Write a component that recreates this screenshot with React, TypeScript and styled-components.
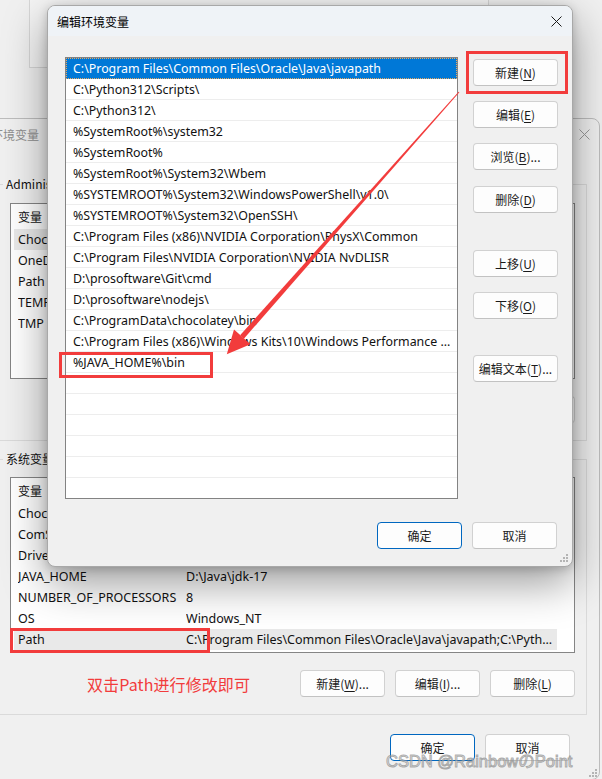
import React from 'react';
import styled, { createGlobalStyle } from 'styled-components';

const UI_FONT = `"Noto Sans", "Noto Sans CJK SC", sans-serif`;
const CJK_FONT = `"Noto Sans CJK SC", "Noto Sans", sans-serif`;
const RED = '#f23c3c';

const GlobalStyle = createGlobalStyle`
  html, body {
    margin: 0;
    padding: 0;
  }
  body {
    background: #f0f0f0;
    font-family: ${UI_FONT};
  }
  * {
    box-sizing: border-box;
  }
`;

const pathEntries = [
  'C:\\Program Files\\Common Files\\Oracle\\Java\\javapath',
  'C:\\Python312\\Scripts\\',
  'C:\\Python312\\',
  '%SystemRoot%\\system32',
  '%SystemRoot%',
  '%SystemRoot%\\System32\\Wbem',
  '%SYSTEMROOT%\\System32\\WindowsPowerShell\\v1.0\\',
  '%SYSTEMROOT%\\System32\\OpenSSH\\',
  'C:\\Program Files (x86)\\NVIDIA Corporation\\PhysX\\Common',
  'C:\\Program Files\\NVIDIA Corporation\\NVIDIA NvDLISR',
  'D:\\prosoftware\\Git\\cmd',
  'D:\\prosoftware\\nodejs\\',
  'C:\\ProgramData\\chocolatey\\bin',
  'C:\\Program Files (x86)\\Windows Kits\\10\\Windows Performance ...',
  '%JAVA_HOME%\\bin',
];

// values of the user variables sit behind the edit dialog, so only names are shown
const userVars = ['ChocolateyLastPathUpdate', 'OneDrive', 'Path', 'TEMP', 'TMP'];

const systemVars = [
  ['ChocolateyInstall', ''],
  ['ComSpec', ''],
  ['DriverData', ''],
  ['JAVA_HOME', 'D:\\Java\\jdk-17'],
  ['NUMBER_OF_PROCESSORS', '8'],
  ['OS', 'Windows_NT'],
  ['Path', 'C:\\Program Files\\Common Files\\Oracle\\Java\\javapath;C:\\Pyth...'],
];

// ---------- desktop ----------

const Desktop = styled.div`
  position: relative;
  width: 602px;
  height: 779px;
  overflow: hidden;
  background: #f0f0f0;
`;

const FarWindow = styled.div`
  position: absolute;
  left: 29px;
  top: -1px;
  width: 460px;
  height: 69px;
  border: 1px solid #d6d6d6;
  background: #f4f4f4;
`;

// ---------- shared widgets ----------

const CloseGlyph: React.FC<{ color: string }> = ({ color }) => (
  <svg width="11" height="11" viewBox="0 0 11 11">
    <path d="M0.5 0.5 L10.5 10.5 M10.5 0.5 L0.5 10.5" stroke={color} strokeWidth="1" />
  </svg>
);

const Grip: React.FC = () => (
  <svg width="8" height="8" viewBox="0 0 8 8">
    <g fill="#b4b4b4">
      <rect x="6" y="0" width="2" height="2" />
      <rect x="3" y="3" width="2" height="2" />
      <rect x="6" y="3" width="2" height="2" />
      <rect x="0" y="6" width="2" height="2" />
      <rect x="3" y="6" width="2" height="2" />
      <rect x="6" y="6" width="2" height="2" />
    </g>
  </svg>
);

const Button = styled.button<{ $default?: boolean; $mt?: number }>`
  width: 85px;
  height: 27px;
  margin: ${(p) => p.$mt ?? 0}px 0 0;
  padding: 0;
  flex: none;
  background: #fdfdfd;
  border: 1px solid ${(p) => (p.$default ? '#0067c0' : '#d1d1d1')};
  border-bottom-color: ${(p) => (p.$default ? '#0067c0' : '#c2c2c2')};
  border-radius: 4px;
  font-family: ${CJK_FONT};
  font-size: 12px;
  color: #1a1a1a;
  line-height: 25px;

  u {
    text-decoration: underline;
    text-underline-offset: 2px;
  }
`;

// ---------- background window: 环境变量 ----------

const EnvWindow = styled.div`
  position: absolute;
  left: -15px;
  top: 118px;
  width: 615px;
  height: 662px;
  display: flex;
  flex-direction: column;
  background: #f0f0f0;
  border: 1px solid #bdbdbd;
  border-radius: 8px;
`;

const EnvTitle = styled.div`
  height: 31px;
  display: flex;
  align-items: center;
  justify-content: space-between;
  padding: 0 9px 0 5px;
  font-family: ${CJK_FONT};
  font-size: 12px;
  color: #8e8e8e;
`;

const EnvBody = styled.div`
  display: flex;
  flex-direction: column;
  padding: 0 12px 0 12px;
`;

const GroupBox = styled.fieldset<{ $mt: number }>`
  margin: ${(p) => p.$mt}px 0 0;
  padding: 0 11px 17px 11px;
  min-width: 0;
  border: 1px solid #dadada;
`;

const GroupLabel = styled.legend`
  margin-left: -7px;
  padding: 0 3px;
  font-family: ${CJK_FONT};
  font-size: 12px;
  line-height: 16px;
  color: #111;
`;

const VarList = styled.div<{ $mt: number }>`
  margin-top: ${(p) => p.$mt}px;
  height: 176px;
  background: #fff;
  border: 1px solid #858585;
  overflow: hidden;
`;

const VarRow = styled.div<{ $head?: boolean; $selected?: boolean }>`
  display: grid;
  grid-template-columns: 168px 1fr;
  height: ${(p) => (p.$head ? 25 : 21)}px;
  align-items: center;
  margin: 0 17px 0 3px;
  padding-left: 4px;
  background: ${(p) => (p.$selected ? '#e9e9e9' : 'transparent')};
  font-family: ${(p) => (p.$head ? CJK_FONT : UI_FONT)};
  font-size: ${(p) => (p.$head ? 12 : 12.5)}px;
  color: #111;
  white-space: nowrap;

  span {
    overflow: hidden;
  }
`;

const ButtonRow = styled.div`
  display: flex;
  align-items: center;
  justify-content: flex-end;
  gap: 10px;
  margin-top: 17px;
`;

const Hint = styled.div`
  margin-left: 77px;
  margin-right: auto;
  font-family: ${CJK_FONT};
  font-size: 16px;
  color: ${RED};
  letter-spacing: 0.1px;
`;

const Footer = styled.div`
  display: flex;
  justify-content: flex-end;
  gap: 10px;
  margin-top: 19px;
  padding-right: 17px;
`;

const CornerGrip = styled.div<{ $r: number; $b: number }>`
  position: absolute;
  right: ${(p) => p.$r}px;
  bottom: ${(p) => p.$b}px;
  line-height: 0;
`;

// ---------- foreground dialog: 编辑环境变量 ----------

const EditDialog = styled.div`
  position: absolute;
  left: 47px;
  top: 5px;
  width: 526px;
  height: 562px;
  display: flex;
  flex-direction: column;
  background: #f0f0f0;
  border: 1px solid #a8a8a8;
  border-radius: 8px;
  overflow: hidden;
  box-shadow: 0 16px 44px rgba(0, 0, 0, 0.4), 0 2px 10px rgba(0, 0, 0, 0.18);
`;

const DialogTitle = styled.div`
  height: 30px;
  display: flex;
  align-items: center;
  justify-content: space-between;
  padding: 0 10px 0 9px;
  background: #eff3f7;
  font-family: ${CJK_FONT};
  font-size: 12px;
  color: #000;
`;

const DialogBody = styled.div`
  display: grid;
  grid-template-columns: 393px 85px;
  column-gap: 15px;
  padding: 21px 14px 16px 17px;
`;

const PathList = styled.div`
  height: 442px;
  background: #fff;
  border: 1px solid #838383;
  overflow: hidden;
`;

const PathRow = styled.div<{ $selected?: boolean }>`
  height: 21px;
  padding: 2px 0 0 7px;
  border-bottom: 1px solid ${(p) => (p.$selected ? '#0078d7' : '#ededed')};
  background: ${(p) => (p.$selected ? '#0078d7' : '#fff')};
  outline: ${(p) => (p.$selected ? '1px dotted #e8a860' : 'none')};
  outline-offset: -1px;
  font-family: ${UI_FONT};
  font-size: 12.4px;
  line-height: 18px;
  color: ${(p) => (p.$selected ? '#fff' : '#111')};
  white-space: nowrap;
  overflow: hidden;
`;

const SideButtons = styled.div`
  display: flex;
  flex-direction: column;
`;

const DialogFooter = styled.div`
  grid-column: 1 / span 2;
  display: flex;
  justify-content: flex-end;
  gap: 10px;
  margin-top: 23px;
  padding-right: 1px;
`;

// ---------- annotations ----------

const MarkBox = styled.div<{ $x: number; $y: number; $w: number; $h: number }>`
  position: absolute;
  left: ${(p) => p.$x}px;
  top: ${(p) => p.$y}px;
  width: ${(p) => p.$w}px;
  height: ${(p) => p.$h}px;
  border: 3px solid ${RED};
  pointer-events: none;
`;

const ArrowLayer = styled.svg`
  position: absolute;
  left: 0;
  top: 0;
  pointer-events: none;
`;

const Watermark = styled.div`
  position: absolute;
  left: 386px;
  top: 751px;
  font-family: "Liberation Sans", "Noto Sans CJK JP", sans-serif;
  font-size: 16.5px;
  line-height: 20px;
  color: rgba(240, 240, 240, 0.5);
  -webkit-text-stroke: 1px rgba(120, 120, 120, 0.6);
  white-space: nowrap;
  pointer-events: none;
`;

const Key: React.FC<{ k: string }> = ({ k }) => (
  <>
    (<u>{k}</u>)
  </>
);

const App: React.FC = () => {
  const emptyRows = Array.from({ length: 6 });

  return (
    <>
      <GlobalStyle />
      <Desktop>
        <FarWindow />

        <EnvWindow>
          <EnvTitle>
            <span>环境变量</span>
            <CloseGlyph color="#9a9a9a" />
          </EnvTitle>
          <EnvBody>
            <GroupBox $mt={26}>
              <GroupLabel>Administrator 的用户变量(<u>U</u>)</GroupLabel>
              <VarList $mt={11}>
                <VarRow $head>
                  <span>变量</span>
                </VarRow>
                {userVars.map((name, i) => (
                  <VarRow key={name} $selected={i === 0}>
                    <span>{name}</span>
                  </VarRow>
                ))}
              </VarList>
              <ButtonRow>
                <Button>新建<Key k="N" />...</Button>
                <Button>编辑<Key k="E" />...</Button>
                <Button>删除<Key k="D" /></Button>
              </ButtonRow>
            </GroupBox>

            <GroupBox $mt={10}>
              <GroupLabel>系统变量(<u>S</u>)</GroupLabel>
              <VarList $mt={10}>
                <VarRow $head>
                  <span>变量</span>
                </VarRow>
                {systemVars.map(([name, value]) => (
                  <VarRow key={name} $selected={name === 'Path'}>
                    <span>{name}</span>
                    <span>{value}</span>
                  </VarRow>
                ))}
              </VarList>
              <ButtonRow>
                <Hint>双击Path进行修改即可</Hint>
                <Button>新建<Key k="W" />...</Button>
                <Button>编辑<Key k="I" />...</Button>
                <Button>删除<Key k="L" /></Button>
              </ButtonRow>
            </GroupBox>

            <Footer>
              <Button $default>确定</Button>
              <Button>取消</Button>
            </Footer>
          </EnvBody>
          <CornerGrip $r={2} $b={2}>
            <Grip />
          </CornerGrip>
        </EnvWindow>

        <EditDialog>
          <DialogTitle>
            <span>编辑环境变量</span>
            <CloseGlyph color="#1a1a1a" />
          </DialogTitle>
          <DialogBody>
            <PathList>
              {pathEntries.map((entry, i) => (
                <PathRow key={entry} $selected={i === 0}>
                  {entry}
                </PathRow>
              ))}
              {emptyRows.map((_, i) => (
                <PathRow key={`empty-${i}`} />
              ))}
            </PathList>
            <SideButtons>
              <Button $mt={2}>新建<Key k="N" /></Button>
              <Button $mt={15}>编辑<Key k="E" /></Button>
              <Button $mt={15}>浏览<Key k="B" />...</Button>
              <Button $mt={16}>删除<Key k="D" /></Button>
              <Button $mt={37}>上移<Key k="U" /></Button>
              <Button $mt={15}>下移<Key k="O" /></Button>
              <Button $mt={36}>编辑文本<Key k="T" />...</Button>
            </SideButtons>
            <DialogFooter>
              <Button $default>确定</Button>
              <Button>取消</Button>
            </DialogFooter>
          </DialogBody>
          <CornerGrip $r={4} $b={4}>
            <Grip />
          </CornerGrip>
        </EditDialog>

        <MarkBox $x={466} $y={51} $w={102} $h={43} />
        <MarkBox $x={59} $y={352} $w={154} $h={26} />
        <MarkBox $x={10} $y={628} $w={200} $h={25} />

        <ArrowLayer width="602" height="779" viewBox="0 0 602 779">
          <polygon points="458.6,91.7 459.4,92.3 243.9,338.7 240.1,335.3" fill={RED} />
          <polygon points="226.8,354.2 250.5,344.2 234.0,329.6" fill={RED} />
        </ArrowLayer>

        <Watermark>CSDN @RainbowのPoint</Watermark>
      </Desktop>
    </>
  );
};

export default App;
